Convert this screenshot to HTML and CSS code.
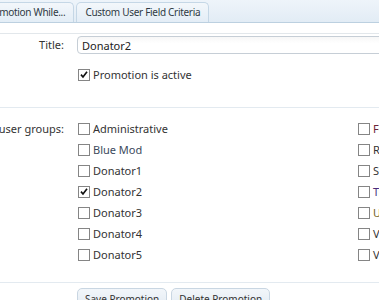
FILE: index.html
```html
<!DOCTYPE html>
<html lang="en">
<head>
  <meta charset="UTF-8">
  <title>Edit User Promotion</title>
  <link rel="stylesheet" href="styles.css">
</head>
<body>
  <div class="tabs">
    <span class="tab tab-first">Promotion While...</span>
    <span class="tab">Custom User Field Criteria</span>
  </div>

  <form class="form">
    <div class="section">
      <dl class="row">
        <dt>Title:</dt>
        <dd><input class="text" type="text" value="Donator2"></dd>
      </dl>
      <dl class="row row-active">
        <dt></dt>
        <dd><label class="check"><span class="box on"><svg viewBox="0 0 12 12"><path d="M2.4 5.6 L4.8 8.4 L9.6 2.2"/></svg></span>Promotion is active</label></dd>
      </dl>
    </div>

    <div class="section section-groups">
      <dl class="row">
        <dt>Apply to user groups:</dt>
        <dd>
          <ul class="groups">
            <li><label class="check"><span class="box"></span>Administrative</label></li>
            <li><label class="check"><span class="box"></span><span class="g-blue">Blue Mod</span></label></li>
            <li><label class="check"><span class="box"></span>Donator1</label></li>
            <li><label class="check"><span class="box on"><svg viewBox="0 0 12 12"><path d="M2.4 5.6 L4.8 8.4 L9.6 2.2"/></svg></span>Donator2</label></li>
            <li><label class="check"><span class="box"></span>Donator3</label></li>
            <li><label class="check"><span class="box"></span>Donator4</label></li>
            <li><label class="check"><span class="box"></span>Donator5</label></li>
            <li><label class="check"><span class="box"></span><span class="g-founder">Founder</span></label></li>
            <li><label class="check"><span class="box"></span>Registered</label></li>
            <li><label class="check"><span class="box"></span>Staff</label></li>
            <li><label class="check"><span class="box"></span><span class="g-trial">Trial Mod</span></label></li>
            <li><label class="check"><span class="box"></span><span class="g-unconf">Unconfirmed</span></label></li>
            <li><label class="check"><span class="box"></span>VIP</label></li>
            <li><label class="check"><span class="box"></span>VIP Plus</label></li>
          </ul>
        </dd>
      </dl>
    </div>

    <div class="submit">
      <button type="button" class="button">Save Promotion</button>
      <button type="button" class="button">Delete Promotion</button>
    </div>
  </form>
</body>
</html>
```

FILE: styles.css
```css
html, body {
  margin: 0;
  overflow: hidden;
}

body {
  font-family: "Noto Sans", "DejaVu Sans", sans-serif;
  font-size: 11px;
  color: #333;
  background: #fff;
}

.tabs {
  display: flex;
  align-items: flex-end;
  height: 22px;
  background: linear-gradient(#eef4fa, #e2ecf5);
  border-bottom: 1px solid #bcd0e0;
}

.tab {
  height: 19px;
  line-height: 19px;
  padding: 0 8px;
  margin-right: 2px;
  white-space: nowrap;
  font-size: 10px;
  letter-spacing: -0.3px;
  color: #2f3a44;
  background: linear-gradient(#f3f7fb, #e3edf6);
  border: 1px solid #c5d7e6;
  border-bottom: 0;
  border-radius: 5px 5px 0 0;
}

.tab-first {
  margin-left: -25px;
}

.form {
  margin-top: 10px;
  border-top: 1px solid #e2e7eb;
}

.section {
  padding: 2px 0 22px;
  border-bottom: 1px solid #e3eaf0;
}

.section-groups {
  padding: 10px 0 17px;
}

.row {
  display: flex;
  margin: 0;
}

.row dt {
  flex: 0 0 64px;
  width: 64px;
  min-width: 0;
  display: flex;
  justify-content: flex-end;
  white-space: nowrap;
  line-height: 18px;
  margin-right: 14px;
}

.section-groups .row dt {
  line-height: 21px;
}

.row dd {
  margin: 0;
  flex: 1;
  min-width: 0;
}

.row-active {
  margin-top: 10px;
}

.text {
  display: block;
  box-sizing: border-box;
  width: 400px;
  height: 18px;
  margin-left: -1px;
  padding: 0 4px;
  font: inherit;
  color: #222;
  border: 1px solid #c6ced6;
  border-radius: 4px;
  background: linear-gradient(#f7f7f7, #fff 40%);
}

.check {
  display: flex;
  align-items: center;
  height: 21px;
  white-space: nowrap;
}

.box {
  box-sizing: border-box;
  flex: 0 0 12px;
  width: 12px;
  height: 12px;
  margin-right: 3px;
  border: 1px solid #858585;
  background: #fff;
}

.box svg {
  display: block;
  width: 10px;
  height: 10px;
  fill: none;
  stroke: #111;
  stroke-width: 2;
}

.groups {
  list-style: none;
  margin: 0;
  padding: 0;
  display: grid;
  grid-template-columns: 280px 280px;
  grid-template-rows: repeat(7, 21px);
  grid-auto-flow: column;
}

.g-blue { color: #3b4a5c; }
.g-founder { color: #6b2438; }
.g-trial { color: #4a2a7a; }
.g-unconf { color: #766528; }

.submit {
  display: flex;
  gap: 4px;
  padding: 5px 0 0 77px;
}

.button {
  height: 22px;
  padding: 0 7px;
  font: inherit;
  font-size: 10px;
  color: #333;
  border: 1px solid #c9d6e2;
  border-radius: 5px;
  background: linear-gradient(#f2f6fa, #e2eaf2);
}
```
